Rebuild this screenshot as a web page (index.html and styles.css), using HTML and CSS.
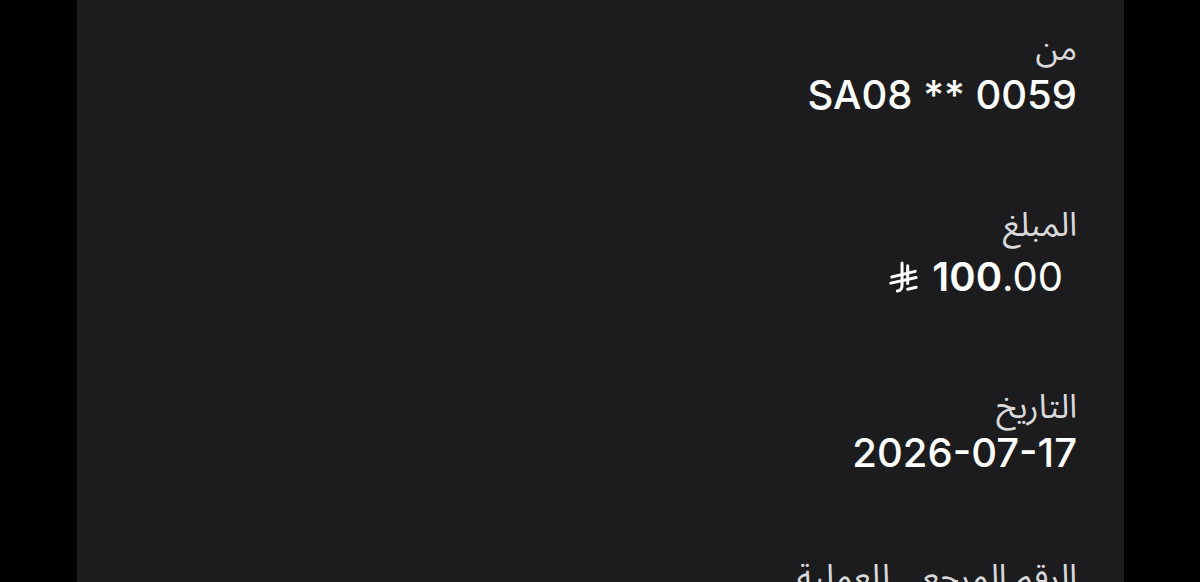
FILE: index.html
```html
<!DOCTYPE html>
<html lang="ar">
<head>
<meta charset="utf-8">
<title>تفاصيل العملية</title>
<link rel="stylesheet" href="styles.css">
</head>
<body>
<main class="sheet" dir="rtl">
  <section class="field">
    <div class="label">من</div>
    <div class="value" dir="ltr">SA08 ** 0059</div>
  </section>
  <section class="field">
    <div class="label">المبلغ</div>
    <div class="value amount">
      <span class="num" dir="ltr"><b>100</b>.00</span>
      <svg class="riyal" viewBox="0 0 32 32" aria-label="ريال">
        <path d="M15 1 V25 Q15 30 10 31" />
        <path d="M21 4 V23" />
        <path d="M4 16 L29 10" />
        <path d="M3 22.5 L30 16.5" />
        <path d="M21 29 L30 27" />
      </svg>
    </div>
  </section>
  <section class="field">
    <div class="label">التاريخ</div>
    <div class="value" dir="ltr">2026-07-17</div>
  </section>
  <section class="field field--tail">
    <div class="label">الرقم المرجعي للعملية</div>
  </section>
</main>
</body>
</html>
```
FILE: styles.css
```css
html, body {
  margin: 0;
  height: 100%;
  background: #000;
  overflow: hidden;
}

.sheet {
  box-sizing: border-box;
  margin: 0 76px 0 77px;
  height: 100%;
  overflow: hidden;
  background: #1c1c1e;
  padding: 28px 47px 0;
  display: flex;
  flex-direction: column;
  gap: 86px;
}

.field {
  display: flex;
  flex-direction: column;
  align-items: flex-start;
  flex-shrink: 0;
}

.field--tail {
  margin-top: -6px;
}

.label {
  font-family: "Noto Sans Arabic", "DejaVu Sans", sans-serif;
  font-size: 33px;
  line-height: 44px;
  color: #d9d9db;
}

.value {
  font-family: Inter, "Liberation Sans", sans-serif;
  font-size: 40px;
  font-weight: 500;
  line-height: 46px;
  color: #fff;
}

.amount {
  display: flex;
  align-items: center;
  gap: 14px;
  padding-right: 14px;
  margin-top: 6px;
}

.num {
  font-weight: 400;
}

.num b {
  font-weight: 600;
}

.riyal {
  width: 30px;
  height: 32px;
  fill: none;
  stroke: #fff;
  stroke-width: 3.2;
  stroke-linecap: round;
}
```
